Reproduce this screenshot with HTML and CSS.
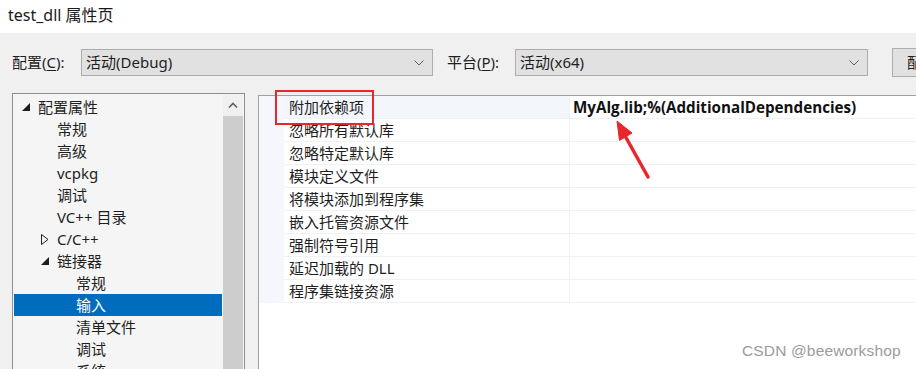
FILE: index.html
```html
<!DOCTYPE html>
<html lang="zh-CN">
<head>
<meta charset="utf-8">
<title>test_dll 属性页</title>
<link rel="stylesheet" href="styles.css">
</head>
<body>
<div class="window">
  <div class="titlebar">test_dll 属性页</div>

  <div class="config-row">
    <label class="cfg-label">配置(<u>C</u>):</label>
    <div class="combo combo-config">
      <span class="combo-text">活动(Debug)</span>
      <svg class="chev" width="10" height="6" viewBox="0 0 10 6"><polyline points="0.5,0.5 5,5 9.5,0.5" fill="none" stroke="#5f5f5f" stroke-width="1"/></svg>
    </div>
    <label class="cfg-label plat-label">平台(<u>P</u>):</label>
    <div class="combo combo-plat">
      <span class="combo-text">活动(x64)</span>
      <svg class="chev" width="10" height="6" viewBox="0 0 10 6"><polyline points="0.5,0.5 5,5 9.5,0.5" fill="none" stroke="#5f5f5f" stroke-width="1"/></svg>
    </div>
    <div class="btn">配置管理器(O)...</div>
  </div>

  <div class="main">
    <div class="tree">
      <div class="tree-list">
        <div class="node l0"><span class="exp"><svg width="8" height="8" viewBox="0 0 8 8"><polygon points="8,0 8,8 0,8" fill="#1e1e1e"/></svg></span>配置属性</div>
        <div class="node l1"><span class="exp"></span>常规</div>
        <div class="node l1"><span class="exp"></span>高级</div>
        <div class="node l1"><span class="exp"></span>vcpkg</div>
        <div class="node l1"><span class="exp"></span>调试</div>
        <div class="node l1"><span class="exp"></span>VC++ 目录</div>
        <div class="node l1"><span class="exp"><svg width="8" height="11" viewBox="0 0 8 11"><polygon points="0.5,0.5 7,5.5 0.5,10.5" fill="none" stroke="#1e1e1e" stroke-width="1"/></svg></span>C/C++</div>
        <div class="node l1"><span class="exp"><svg width="8" height="8" viewBox="0 0 8 8"><polygon points="8,0 8,8 0,8" fill="#1e1e1e"/></svg></span>链接器</div>
        <div class="node l2"><span class="exp"></span>常规</div>
        <div class="node l2 selected"><span class="exp"></span>输入</div>
        <div class="node l2"><span class="exp"></span>清单文件</div>
        <div class="node l2"><span class="exp"></span>调试</div>
        <div class="node l2"><span class="exp"></span>系统</div>
      </div>
      <div class="vscroll">
        <div class="vs-arrow"><svg width="10" height="6" viewBox="0 0 10 6"><polyline points="1,5.5 5,1.5 9,5.5" fill="none" stroke="#606060" stroke-width="1.6"/></svg></div>
        <div class="vs-thumb"></div>
      </div>
    </div>

    <div class="props">
      <div class="prop-grid">
        <div class="row first"><div class="gut"></div><div class="name">附加依赖项</div><div class="val">MyAlg.lib;%(AdditionalDependencies)</div></div>
        <div class="row"><div class="gut"></div><div class="name">忽略所有默认库</div><div class="val"></div></div>
        <div class="row"><div class="gut"></div><div class="name">忽略特定默认库</div><div class="val"></div></div>
        <div class="row"><div class="gut"></div><div class="name">模块定义文件</div><div class="val"></div></div>
        <div class="row"><div class="gut"></div><div class="name">将模块添加到程序集</div><div class="val"></div></div>
        <div class="row"><div class="gut"></div><div class="name">嵌入托管资源文件</div><div class="val"></div></div>
        <div class="row"><div class="gut"></div><div class="name">强制符号引用</div><div class="val"></div></div>
        <div class="row"><div class="gut"></div><div class="name">延迟加载的 DLL</div><div class="val"></div></div>
        <div class="row"><div class="gut"></div><div class="name">程序集链接资源</div><div class="val"></div></div>
      </div>
    </div>
  </div>

  <div class="redbox"></div>
  <svg class="arrow" width="916" height="369" viewBox="0 0 916 369">
    <line x1="648" y1="177" x2="624" y2="134" stroke="#e8262c" stroke-width="3.5" stroke-linecap="round"/>
    <polygon points="617,121 632,133 619.5,140.5" fill="#e8262c" stroke="#e8262c" stroke-width="1" stroke-linejoin="round"/>
  </svg>
  <div class="watermark">CSDN @beeworkshop</div>
</div>
</body>
</html>
```

FILE: styles.css
```css
html, body {
  margin: 0;
  padding: 0;
}
body {
  width: 916px;
  height: 369px;
  overflow: hidden;
  background: #f0f0f0;
  font-family: "Noto Sans", "Noto Sans CJK SC", sans-serif;
  color: #1e1e1e;
}
.window {
  position: relative;
  width: 916px;
  height: 369px;
  overflow: hidden;
}
.titlebar {
  height: 33px;
  background: #ffffff;
  padding-left: 8px;
  font-size: 16px;
  line-height: 30px;
  color: #1a1a1a;
}
.config-row {
  display: flex;
  align-items: center;
  height: 27px;
  margin-top: 16px;
  font-size: 15px;
}
.cfg-label {
  flex: none;
  width: 69px;
  padding-left: 12px;
  line-height: 27px;
  white-space: nowrap;
}
.cfg-label u {
  text-underline-offset: 2px;
}
.plat-label {
  width: 68px;
  padding-left: 14px;
}
.combo {
  flex: none;
  box-sizing: border-box;
  height: 27px;
  border: 1px solid #adadad;
  background: #e1e1e1;
  display: flex;
  align-items: center;
  justify-content: space-between;
  padding: 0 8px 0 4px;
}
.combo-config {
  width: 352px;
}
.combo-plat {
  width: 353px;
}
.combo-text {
  line-height: 25px;
}
.chev {
  display: block;
}
.btn {
  flex: none;
  box-sizing: border-box;
  height: 29px;
  margin-left: 24px;
  padding-left: 14px;
  border: 1px solid #adadad;
  background: #e1e1e1;
  line-height: 27px;
  white-space: nowrap;
  width: 140px;
}
.main {
  display: flex;
  align-items: flex-start;
  margin-top: 17px;
}
.tree {
  flex: none;
  box-sizing: border-box;
  margin-left: 12px;
  width: 233px;
  height: 290px;
  border: 1px solid #8e8f94;
  background: #f5f5f5;
  display: flex;
}
.tree-list {
  width: 208px;
  padding: 2px 0 0 1px;
  font-size: 15px;
}
.node {
  height: 22px;
  line-height: 22px;
  display: flex;
  align-items: center;
  white-space: nowrap;
}
.node.l0 { padding-left: 8px; }
.node.l1 { padding-left: 27px; }
.node.l2 { padding-left: 46px; }
.exp {
  width: 16px;
  flex: none;
  display: flex;
  align-items: center;
}
.exp svg { display: block; }
.node.selected {
  background: #006cbe;
  color: #ffffff;
}
.vscroll {
  margin-left: 1px;
  width: 20px;
  display: flex;
  flex-direction: column;
  background: #f0f0f0;
}
.vs-arrow {
  height: 22px;
  display: flex;
  align-items: center;
  justify-content: center;
}
.vs-arrow svg { display: block; }
.vs-thumb {
  flex: 1;
  background: #cdcdcd;
}
.props {
  box-sizing: border-box;
  margin-left: 13px;
  margin-top: 2px;
  flex: 1;
  height: 290px;
  border-left: 1px solid #a0a0a0;
  border-top: 1px solid #a0a0a0;
  background: #ffffff;
}
.prop-grid {
  display: flex;
  flex-direction: column;
}
.row {
  display: flex;
  height: 23px;
}
.gut {
  width: 25px;
  flex: none;
  background: #f5f7fc;
}
.name {
  box-sizing: border-box;
  width: 286px;
  flex: none;
  padding-left: 5px;
  font-size: 15px;
  line-height: 22px;
  border-bottom: 1px solid #eef1f6;
  border-right: 1px solid #eef1f6;
  white-space: nowrap;
  color: #1e1e1e;
}
.row.first .name {
  background: #f3f6fb;
}
.val {
  flex: 1;
  box-sizing: border-box;
  padding-left: 3px;
  border-bottom: 1px solid #eef1f6;
  font-family: "Open Sans", "Noto Sans", sans-serif;
  font-weight: 700;
  font-size: 15.2px;
  line-height: 22px;
  color: #111111;
  white-space: nowrap;
}
.redbox {
  position: absolute;
  left: 275px;
  top: 90px;
  width: 95px;
  height: 31px;
  border: 2px solid #e8262c;
}
.arrow {
  position: absolute;
  left: 0;
  top: 0;
  pointer-events: none;
}
.watermark {
  position: absolute;
  left: 742px;
  top: 342px;
  font-family: "Liberation Sans", Arial, sans-serif;
  font-size: 15.5px;
  letter-spacing: 0.15px;
  color: #9b9b9b;
  white-space: nowrap;
}
```
